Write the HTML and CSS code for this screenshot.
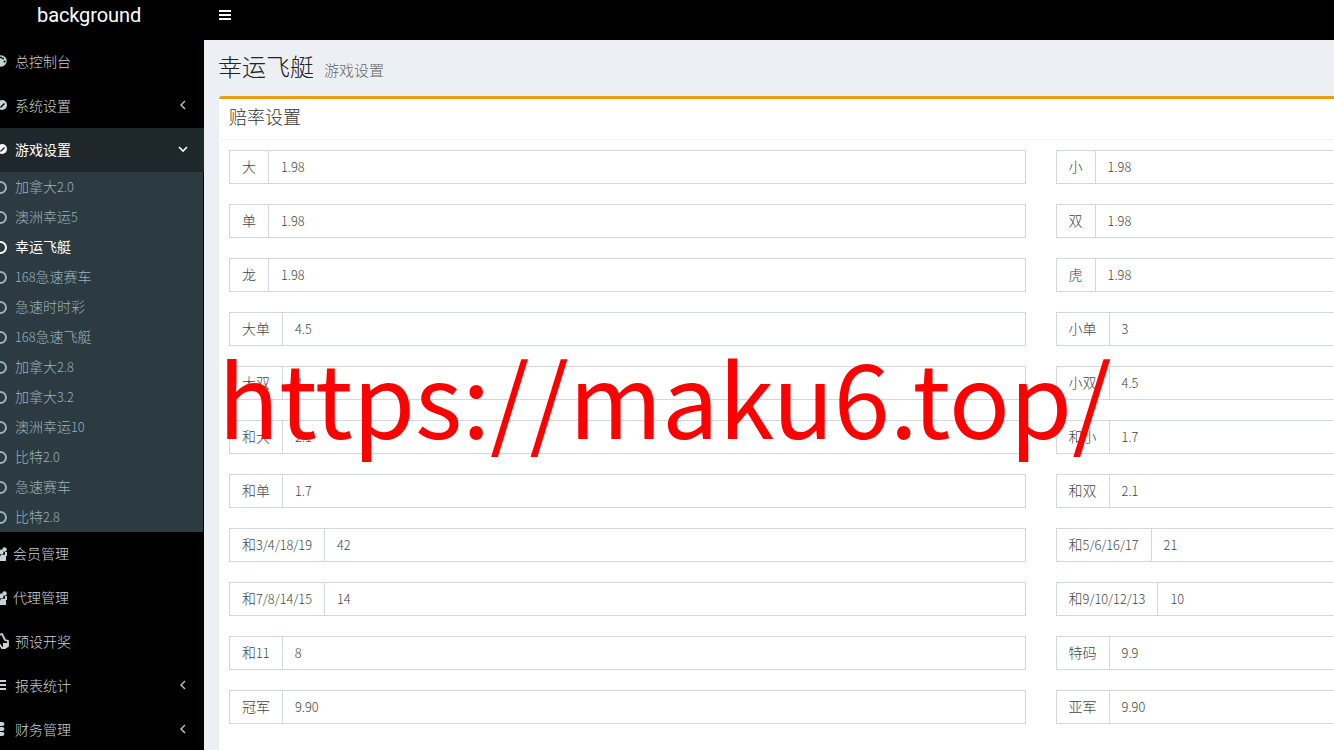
FILE: index.html
```html
<!DOCTYPE html>
<html lang="zh-CN">
<head>
<meta charset="utf-8">
<title>幸运飞艇</title>
<link rel="stylesheet" href="styles.css">
</head>
<body>
<div class="app">
  <header class="topbar">
    <div class="logo">background</div>
    <div class="toggle"><svg class="burger" viewBox="0 0 12 10" width="12" height="10"><path d="M0 0h12v2H0zM0 4h12v2H0zM0 8h12v2H0z"/></svg></div>
  </header>
  <div class="main">
    <aside class="sidebar">
      <a class="item"><svg class="ic" viewBox="0 0 20 20"><circle cx="11" cy="10" r="5.700"/><circle cx="13" cy="7.500" r="1" fill="#000"/><circle cx="14.500" cy="10.500" r="1" fill="#000"/><circle cx="11" cy="6.500" r="1" fill="#000"/></svg><span>总控制台</span></a>
      <a class="item"><svg class="ic" viewBox="0 0 20 20"><circle cx="12" cy="10" r="5"/><path d="M10 12l4-4 1 1-4 4z" fill="#000"/></svg><span>系统设置</span><svg class="chev" viewBox="0 0 8 12"><path d="M6 2L2 6l4 4" fill="none" stroke="currentColor" stroke-width="1.400"/></svg></a>
      <a class="item active"><svg class="ic" viewBox="0 0 20 20"><circle cx="12" cy="10" r="5"/><path d="M10 12l4-4 1 1-4 4z" fill="#1e282c"/></svg><span>游戏设置</span><svg class="chev open" viewBox="0 0 12 8"><path d="M2 2l4 4 4-4" fill="none" stroke="currentColor" stroke-width="1.600"/></svg></a>
      <ul class="sub">
        <li><i class="ring"></i>加拿大<span class="n">2.0</span></li>
        <li><i class="ring"></i>澳洲幸运<span class="n">5</span></li>
        <li class="on"><i class="ring"></i>幸运飞艇</li>
        <li><i class="ring"></i><span class="n">168</span>急速赛车</li>
        <li><i class="ring"></i>急速时时彩</li>
        <li><i class="ring"></i><span class="n">168</span>急速飞艇</li>
        <li><i class="ring"></i>加拿大<span class="n">2.8</span></li>
        <li><i class="ring"></i>加拿大<span class="n">3.2</span></li>
        <li><i class="ring"></i>澳洲幸运<span class="n">10</span></li>
        <li><i class="ring"></i>比特<span class="n">2.0</span></li>
        <li><i class="ring"></i>急速赛车</li>
        <li><i class="ring"></i>比特<span class="n">2.8</span></li>
      </ul>
      <a class="item tight"><svg class="ic" viewBox="0 0 20 20"><circle cx="14.500" cy="6.500" r="2.200"/><circle cx="11" cy="9" r="2.500"/><path d="M10 18v-4q0-2.500 3-2.500t3 2.500v4zM15 9h2v4h-2z"/></svg><span>会员管理</span></a>
      <a class="item tight"><svg class="ic" viewBox="0 0 20 20"><circle cx="14.500" cy="6.500" r="2.200"/><circle cx="11" cy="9" r="2.500"/><path d="M10 18v-4q0-2.500 3-2.500t3 2.500v4zM15 9h2v4h-2z"/></svg><span>代理管理</span></a>
      <a class="item"><svg class="ic" viewBox="0 0 20 20"><path d="M9 4l3-1 3 6 3 1v5l-3 2h-3l-4-6z" fill="none" stroke="currentColor" stroke-width="1.800"/><path d="M13 12h5v4h-5z"/></svg><span>预设开奖</span></a>
      <a class="item"><svg class="ic" viewBox="0 0 20 20"><path d="M0 5h16v2H0zM0 9h16v2H0zM0 13h16v2H0z"/></svg><span>报表统计</span><svg class="chev" viewBox="0 0 8 12"><path d="M6 2L2 6l4 4" fill="none" stroke="currentColor" stroke-width="1.400"/></svg></a>
      <a class="item"><svg class="ic" viewBox="0 0 20 20"><path d="M4 3h8q2.500 0 2.500 2T12 7H4zM4 8h8q2.500 0 2.500 2T12 12H4zM4 13h8q2.500 0 2.500 2T12 17H4z"/></svg><span>财务管理</span><svg class="chev" viewBox="0 0 8 12"><path d="M6 2L2 6l4 4" fill="none" stroke="currentColor" stroke-width="1.400"/></svg></a>
    </aside>
    <main class="content">
      <h1 class="title">幸运飞艇<small>游戏设置</small></h1>
      <section class="box">
        <h3 class="box-head">赔率设置</h3>
        <div class="form">
          <div class="field"><label>大</label><b>1.98</b></div>
          <div class="field"><label>小</label><b>1.98</b></div>
          <div class="field"><label>单</label><b>1.98</b></div>
          <div class="field"><label>双</label><b>1.98</b></div>
          <div class="field"><label>龙</label><b>1.98</b></div>
          <div class="field"><label>虎</label><b>1.98</b></div>
          <div class="field"><label>大单</label><b>4.5</b></div>
          <div class="field"><label>小单</label><b>3</b></div>
          <div class="field"><label>大双</label><b>3</b></div>
          <div class="field"><label>小双</label><b>4.5</b></div>
          <div class="field"><label>和大</label><b>2.1</b></div>
          <div class="field"><label>和小</label><b>1.7</b></div>
          <div class="field"><label>和单</label><b>1.7</b></div>
          <div class="field"><label>和双</label><b>2.1</b></div>
          <div class="field"><label>和<span class="n">3/4/18/19</span></label><b>42</b></div>
          <div class="field"><label>和<span class="n">5/6/16/17</span></label><b>21</b></div>
          <div class="field"><label>和<span class="n">7/8/14/15</span></label><b>14</b></div>
          <div class="field"><label>和<span class="n">9/10/12/13</span></label><b>10</b></div>
          <div class="field"><label>和<span class="n">11</span></label><b>8</b></div>
          <div class="field"><label>特码</label><b>9.9</b></div>
          <div class="field"><label>冠军</label><b>9.90</b></div>
          <div class="field"><label>亚军</label><b>9.90</b></div>
        </div>
      </section>
    </main>
  </div>
  <div class="watermark">https://maku6.top/</div>
</div>
</body>
</html>
```
FILE: styles.css
```css
* { box-sizing: border-box; }
html, body { margin: 0; height: 100%; overflow: hidden; }
body { font-family: "Noto Sans CJK SC", "Noto Sans", sans-serif; font-size: 14px; font-weight: 300; color: #333; background: #ecf0f5; }
.app { position: relative; width: 1334px; height: 750px; overflow: hidden; }
.n { font-size: 12.75px; }
.topbar { display: flex; height: 40px; background: #000; color: #fff; }
.logo { width: 178px; padding-left: 37px; font: 20px/30px Roboto, sans-serif; letter-spacing: -0.1px; flex: none; margin-right: 26px; }
.toggle { padding: 10px 0 0 15px; line-height: 0; }
.burger { fill: #fff; }
.main { display: flex; height: 710px; }
.sidebar { width: 204px; flex: none; background: #000; color: #c6d3d9; overflow: hidden; }
.item { display: flex; align-items: center; height: 44px; padding: 0 17px 2px 0; line-height: 20px; }
.item > span { margin-left: 15px; flex: 1; }
.item.tight > span { margin-left: 13px; }
.item.active { background: #1e282c; color: #fff; font-weight: 400; }
.ic { width: 20px; height: 20px; margin: 0 -10px; flex: none; fill: currentColor; }
.chev { width: 8px; height: 12px; color: #b8c7ce; flex: none; }
.chev.open { width: 12px; height: 8px; margin-right: -2px; color: #fff; }
.sub { list-style: none; margin: 0 1px 0 0; padding: 0; background: #2c3b41; color: #9ab2bc; }
.sub li { display: flex; align-items: center; height: 30px; padding: 0 0 2px 15px; position: relative; }
.sub li.on { color: #fff; font-weight: 400; }
.ring { position: absolute; left: -6px; top: 9px; width: 13px; height: 13px; border: 2px solid currentColor; border-radius: 50%; }
.content { flex: 1; min-width: 0; padding-left: 15px; overflow: hidden; }
.title { margin: 0 0 0 -1px; height: 56px; padding-top: 9px; font-size: 24px; font-weight: 300; line-height: 34px; color: #222; white-space: nowrap; }
.title small { font-size: 15px; color: #666; margin-left: 10px; font-weight: 300; }
.box { background: #fff; border-top: 3px solid #f39c12; width: 1634px; height: 660px; border-radius: 3px 0 0 0; }
.box-head { margin: 0; height: 41px; padding: 0 10px; font-size: 18px; font-weight: 300; line-height: 35px; color: #333; border-bottom: 1px solid #f4f4f4; }
.form { display: grid; grid-template-columns: 797px 797px; column-gap: 29.6px; row-gap: 20px; padding: 10px; }
.field { display: flex; height: 34px; border: 1px solid #d2d6de; color: #444; }
.field label { padding: 0 12px; line-height: 30px; border-right: 1px solid #d2d6de; flex: none; font-weight: 300; }
.field b { padding: 0 12px; font-size: 12.75px; line-height: 32px; font-weight: 300; }
.watermark { position: absolute; left: 218px; top: 320px; font-size: 100.6px; line-height: 150px; font-weight: 400; color: #f00; white-space: nowrap; }
```
